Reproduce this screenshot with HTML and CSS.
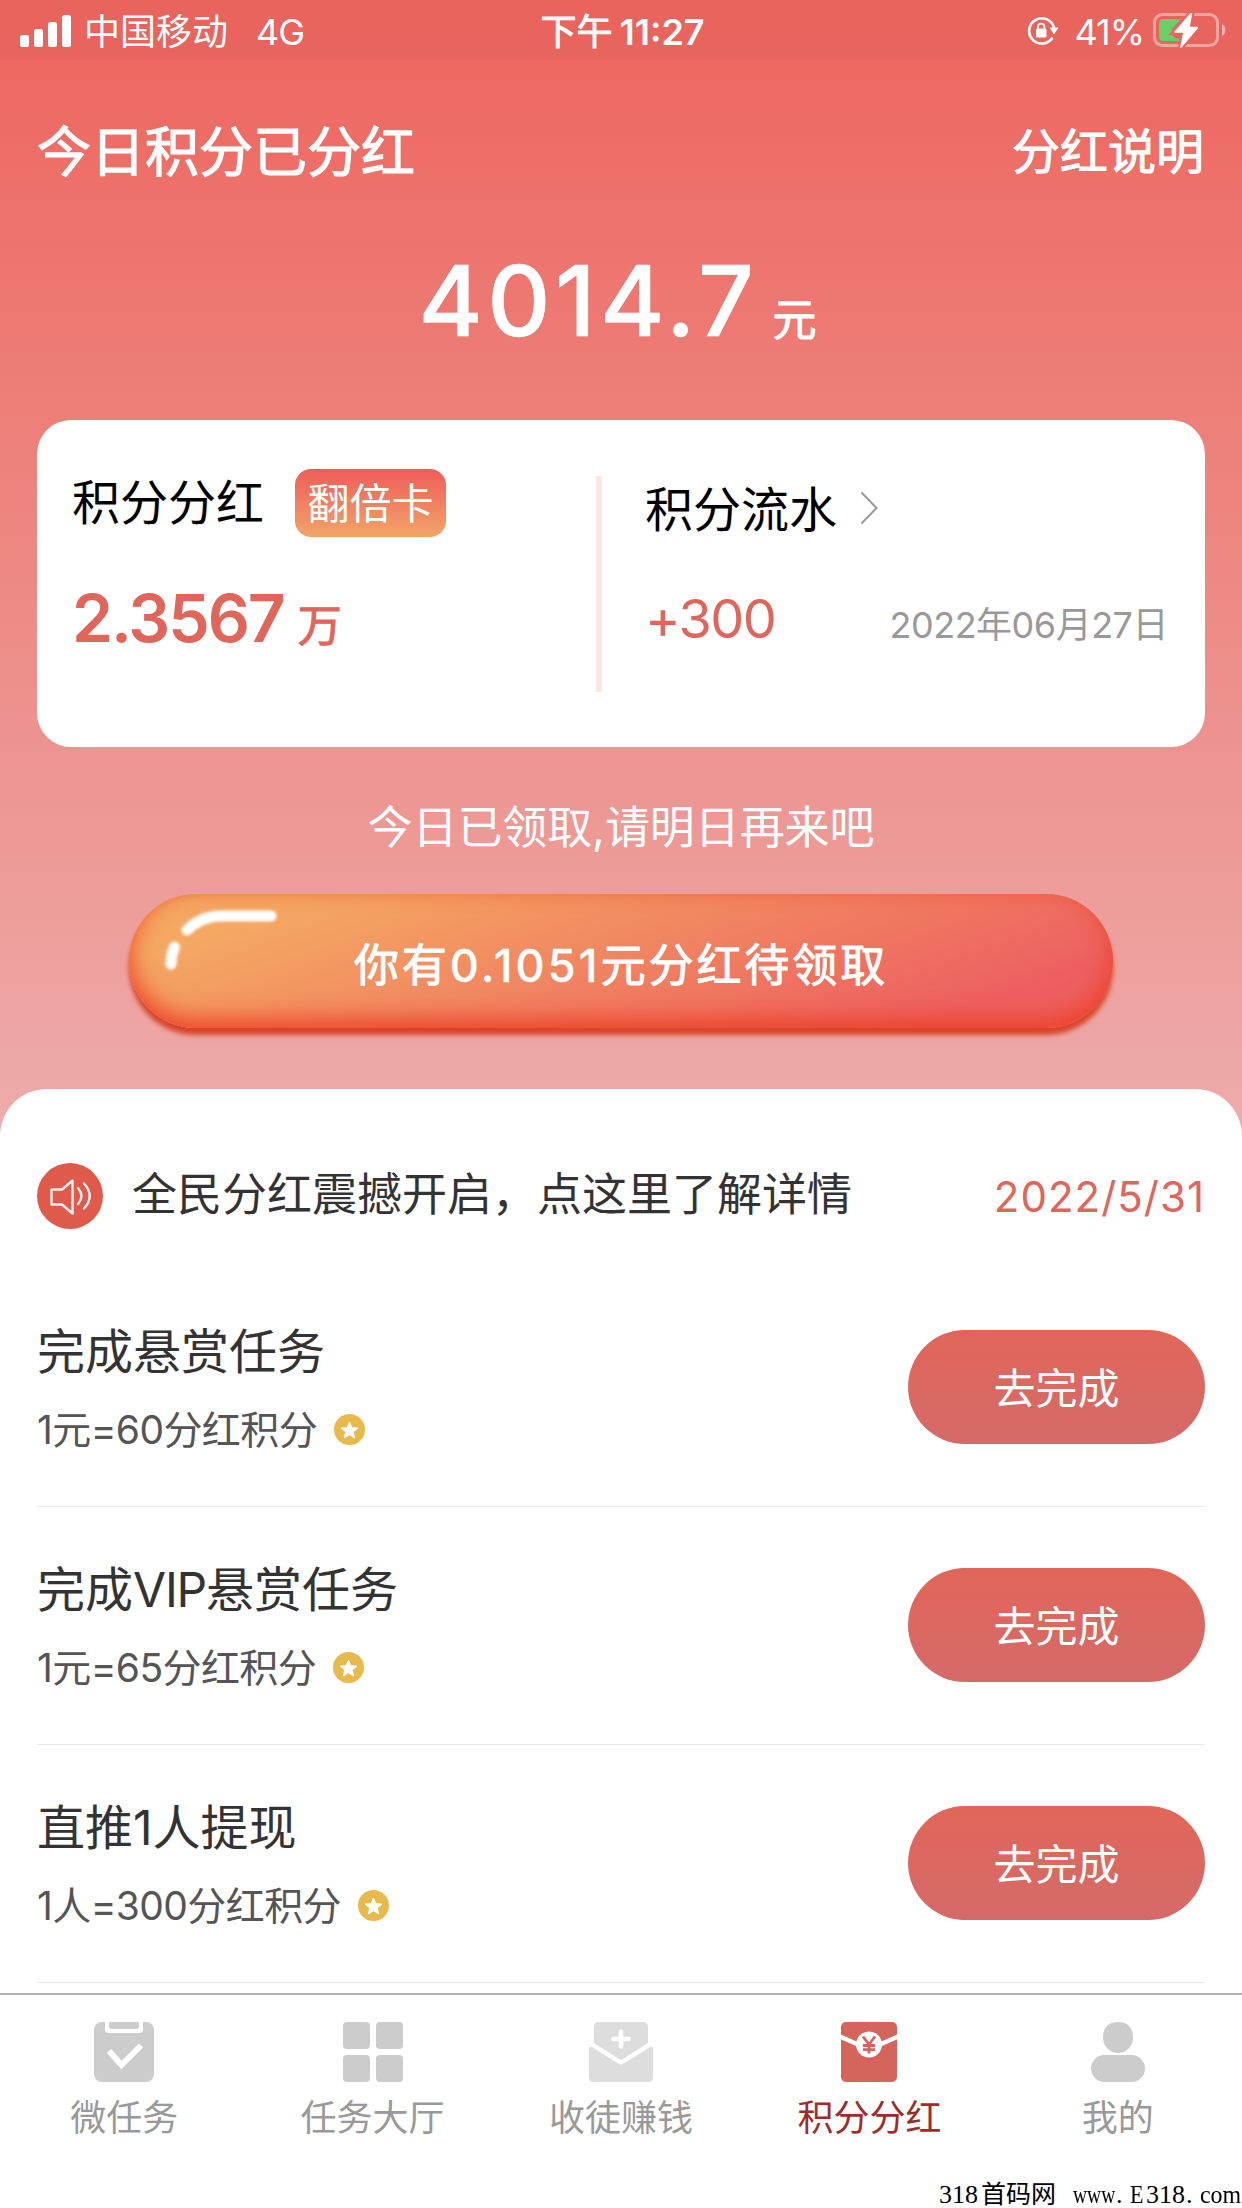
FILE: index.html
```html
<!DOCTYPE html>
<html lang="zh-CN">
<head>
<meta charset="utf-8">
<title>积分分红</title>
<link rel="stylesheet" href="styles.css">
</head>
<body>
<div class="app">
  <main class="screen">
    <div class="statusbar">
      <div class="status-left">
        <svg class="signal" width="51" height="32" viewBox="0 0 51 32" fill="#fff"><rect y="20" width="9" height="12" rx="2.5"/><rect x="14" y="14" width="9" height="18" rx="2.5"/><rect x="28" y="7" width="9" height="25" rx="2.5"/><rect x="42" width="9" height="32" rx="2.5"/></svg>
        <span class="carrier">中国移动</span><span class="network">4G</span>
      </div>
      <div class="clock"><span class="ampm">下午</span><span class="time">11:27</span></div>
      <div class="status-right">
        <svg class="lock" width="32" height="30" viewBox="0 0 32 30"><path d="M25.5 21.5A12.6 12.6 0 1 1 27 12" fill="none" stroke="#fff" stroke-width="2.6"/><path d="M22.5 11.5h9l-4.5 7z" fill="#fff"/><rect x="9" y="12.5" width="10.5" height="9" rx="1.5" fill="#fff"/><path d="M11 13v-2.2a3.2 3.2 0 0 1 6.4 0V13" fill="none" stroke="#fff" stroke-width="1.8"/></svg>
        <span class="percent">41%</span>
        <svg class="battery" width="74" height="36" viewBox="0 0 74 36"><rect x="1.5" y="1.5" width="63" height="31" rx="8" fill="none" stroke="#fff" stroke-opacity=".42" stroke-width="3"/><path d="M69 11c4.500 1.500 4.500 10.500 0 12z" fill="#fff" fill-opacity=".5"/><path d="M10 6h18l-9 10v5q2 5 8 5v2H10q-4 0-4-5V11q0-5 4-5z" fill="#68cf69"/><path d="M38.500 0 22 19h9l-3 15 16.500-19.500H36z" fill="#e9665e" stroke="#e9665e" stroke-width="6"/><path d="M38.500 0 22 19h9l-3 15 16.500-19.500H36z" fill="#fff" stroke="#fff" stroke-width="1.500" stroke-linejoin="round"/></svg>
      </div>
    </div>

    <header class="header">
      <h1 class="title">今日积分已分红</h1>
      <a class="rules">分红说明</a>
    </header>
    <div class="amount"><span class="amount-num">4014.7</span><span class="amount-unit">元</span></div>

    <section class="card">
      <div class="card-left">
        <div class="card-head"><span class="card-title">积分分红</span><span class="badge">翻倍卡</span></div>
        <div class="points"><span class="points-num">2.3567</span><span class="points-unit">万</span></div>
      </div>
      <div class="divider"></div>
      <div class="card-right">
        <div class="flow-head"><span class="card-title">积分流水</span><svg class="chevron" width="20" height="34" viewBox="0 0 20 34"><path d="m1.500 1.500 15 15.500-15 15.500" fill="none" stroke="#999" stroke-width="2"/></svg></div>
        <div class="flow-row"><span class="flow-num">+300</span><span class="flow-date">2022年06月27日</span></div>
      </div>
    </section>

    <p class="hint">今日已领取,请明日再来吧</p>
    <button class="claim">
      <svg class="shine" width="120" height="80" viewBox="0 0 120 80" fill="none" stroke="#fff" stroke-width="11" stroke-linecap="round"><path d="M28 29Q43 15 62 15H112"/><path d="M15.500 46Q12 54 12 63"/></svg>
      <span class="claim-text">你有<span class="claim-num">0.1051</span>元分红待领取</span>
    </button>

    <section class="panel">
      <div class="notice">
        <svg class="speaker" width="66" height="66" viewBox="0 0 66 66"><circle cx="33" cy="33" r="33" fill="#e05a4b"/><g fill="none" stroke="#fff" stroke-width="2.400" stroke-linejoin="round" stroke-linecap="round" stroke-opacity=".9"><path d="M35.500 17.500v33L25 41.500H14.500v-15H25z"/><path d="M41 25q7 8 0 16M47 20.500q11.500 12.500 0 25"/></g></svg>
        <span class="notice-text">全民分红震撼开启，点这里了解详情</span>
        <span class="notice-date">2022/5/31</span>
      </div>
      <div class="tasks">
        <div class="task">
          <div class="task-info"><div class="task-name">完成悬赏任务</div><div class="task-sub"><span class="rule">1元=60分红积分</span><svg class="star" width="31" height="31" viewBox="0 0 31 31"><circle cx="15.500" cy="15.500" r="15.500" fill="#e8ba4e"/><path d="m15.500 8 2.300 5.700 6.100.4-4.700 3.900 1.500 6-5.200-3.300-5.200 3.300 1.500-6L7.100 14.100l6.100-.4z" fill="#fff" stroke="#fff"/></svg></div></div>
          <button class="go">去完成</button>
        </div>
        <div class="task">
          <div class="task-info"><div class="task-name">完成<span class="vip">VIP</span>悬赏任务</div><div class="task-sub"><span class="rule">1元=65分红积分</span><svg class="star" width="31" height="31" viewBox="0 0 31 31"><circle cx="15.500" cy="15.500" r="15.500" fill="#e8ba4e"/><path d="m15.500 8 2.300 5.700 6.100.4-4.700 3.900 1.500 6-5.200-3.300-5.200 3.300 1.500-6L7.100 14.100l6.100-.4z" fill="#fff" stroke="#fff"/></svg></div></div>
          <button class="go">去完成</button>
        </div>
        <div class="task">
          <div class="task-info"><div class="task-name">直推1人提现</div><div class="task-sub"><span class="rule">1人=300分红积分</span><svg class="star" width="31" height="31" viewBox="0 0 31 31"><circle cx="15.500" cy="15.500" r="15.500" fill="#e8ba4e"/><path d="m15.500 8 2.300 5.700 6.100.4-4.700 3.900 1.500 6-5.200-3.300-5.200 3.300 1.500-6L7.100 14.100l6.100-.4z" fill="#fff" stroke="#fff"/></svg></div></div>
          <button class="go">去完成</button>
        </div>
      </div>
    </section>
  </main>

  <nav class="tabbar">
    <a class="tab"><svg width="64" height="60" viewBox="0 0 64 60"><rect x="2" width="60" height="60" rx="8" fill="#ccc"/><path d="M13 0h4v5q0 2 2 2h26q2 0 2-2V0h4v8q0 3-3 3H16q-3 0-3-3z" fill="#fff"/><path d="m17 29 12.500 14L49 23.500" fill="none" stroke="#fff" stroke-width="6"/></svg><span>微任务</span></a>
    <a class="tab"><svg width="64" height="60" viewBox="0 0 64 60" fill="#ccc"><rect x="2" width="27" height="27" rx="4"/><rect x="35" width="27" height="27" rx="4"/><rect x="2" y="33" width="27" height="27" rx="4"/><rect x="35" y="33" width="27" height="27" rx="4"/></svg><span>任务大厅</span></a>
    <a class="tab"><svg width="64" height="60" viewBox="0 0 64 60" fill="#ddd"><path d="M10 0H54q5 0 5 5V21L34 37q-2 1.500-4 0L5 21V5q0-5 5-5z"/><path d="M0 27q0-3 3-2L29 41.500q3 2 6 0L61 25q3-1 3 2V55q0 5-5 5H5q-5 0-5-5z"/><path d="M32 9.500v15M24.500 17h15" stroke="#fff" stroke-width="4.500" stroke-linecap="round"/></svg><span>收徒赚钱</span></a>
    <a class="tab active"><svg width="64" height="60" viewBox="0 0 64 60"><rect x="4" width="56" height="60" rx="5" fill="#d5645c"/><path d="M3 14.500 21 22.500M61 14.500 43 22.500" stroke="#fff" stroke-width="4.500"/><circle cx="32" cy="22.500" r="13" fill="#fff"/><path d="m26 14.500 6 8 6-8M32 22v9.500M26 23.500h12M26 27.700h12" fill="none" stroke="#d5645c" stroke-width="2.800"/></svg><span>积分分红</span></a>
    <a class="tab"><svg width="64" height="60" viewBox="0 0 64 60" fill="#ccc"><path d="M32 0c10 0 15 6 15 15.500S40 31 32 31 17 25 17 15.500 22 0 32 0z"/><rect x="5" y="33" width="54" height="27" rx="13.500"/></svg><span>我的</span></a>
    <div class="watermark"><span class="wm-num">318</span><span class="wm-cn">首码网</span><span class="wm-www">www</span><span class="wm-dot">.</span><span class="wm-e">E</span><span class="wm-num">318</span><span class="wm-dot">.</span><span class="wm-com">com</span></div>
  </nav>
</div>
</body>
</html>
```

FILE: styles.css
```css
* { box-sizing: border-box; }

body {
  margin: 0;
  font-family: Inter, "Noto Sans CJK SC", sans-serif;
  color: #333;
}

h1, p { margin: 0; font-weight: 400; }

button {
  border: 0;
  padding: 0;
  font-family: inherit;
  color: #fff;
}

svg { display: block; flex: none; }

.app {
  display: flex;
  flex-direction: column;
  width: 1242px;
  height: 2208px;
  overflow: hidden;
}

.screen {
  height: 1993px;
  overflow: hidden;
  background: linear-gradient(#ed655d 0, #edaba9 1120px);
}

/* status bar */
.statusbar {
  display: grid;
  grid-template-columns: 1fr auto 1fr;
  height: 60px;
  padding: 0 15px 0 20px;
  align-items: center;
  background: rgba(0, 0, 0, .02);
  color: #fff;
  font-size: 36px;
  line-height: 60px;
}

.status-left, .status-right { display: flex; align-items: center; }
.status-right { justify-content: flex-end; }
.carrier { margin: 2px 0 0 13px; }
.network { margin: 1px 0 0 28px; letter-spacing: -1px; }
.clock { display: flex; gap: 7px; padding-right: 2px; }
.ampm { padding-top: 1px; -webkit-text-stroke: .9px #fff; }
.time { padding-top: 1px; font-weight: 600; }
.percent { margin: 1px 9px 0 15px; letter-spacing: -1px; }

/* header */
.header {
  display: flex;
  justify-content: space-between;
  align-items: center;
  height: 72px;
  margin-top: 55px;
  padding: 0 38px 0 37px;
  color: #fff;
}

.title { margin-top: 4px; font-size: 54px; line-height: 72px; -webkit-text-stroke: 1.2px #fff; }
.rules { margin-top: 2px; font-size: 48px; line-height: 72px; -webkit-text-stroke: 1px #fff; }

.amount {
  display: flex;
  justify-content: center;
  align-items: baseline;
  gap: 14px;
  margin-top: 64px;
  height: 100px;
  padding-right: 7px;
  color: #fff;
  line-height: 100px;
}

.amount-num { font-size: 98px; font-weight: 500; letter-spacing: 4.5px; -webkit-text-stroke: .6px #fff; }
.amount-unit { font-size: 44px; -webkit-text-stroke: 1px #fff; }

/* summary card */
.card {
  display: flex;
  height: 327px;
  margin: 69px 37px 0;
  border-radius: 34px;
  background: #fff;
}

.card-left { width: 559px; padding: 49px 0 0 35px; }
.card-head { display: flex; align-items: center; height: 68px; }
.card-title { font-size: 48px; line-height: 60px; color: #000; }

.badge {
  width: 151px;
  height: 68px;
  margin-left: 31px;
  border-radius: 16px;
  background: linear-gradient(#ee5c59, #f2a468);
  color: #fff;
  font-size: 42px;
  line-height: 70px;
  text-align: center;
}

.points {
  display: flex;
  align-items: baseline;
  gap: 14px;
  margin-top: 41px;
  color: #e0655a;
  line-height: 80px;
}

.points-num { font-size: 66px; font-weight: 600; letter-spacing: -2.1px; }
.points-unit { font-size: 44px; -webkit-text-stroke: 1px #e0655a; }

.divider { width: 6px; height: 216px; margin-top: 56px; background: #f8e7e5; }

.card-right { flex: 1; padding: 60px 37px 0 43px; }
.flow-head { display: flex; align-items: center; height: 60px; }
.chevron { margin: -4px 0 0 23px; }

.flow-row {
  display: flex;
  justify-content: space-between;
  align-items: baseline;
  margin-top: 39px;
  line-height: 80px;
}

.flow-num { font-size: 54px; letter-spacing: -1.6px; color: #e0655a; }
.flow-date { font-size: 36px; letter-spacing: -.5px; color: #999; }

.hint {
  padding-top: 2px;
  margin-top: 50px;
  color: #fff;
  font-size: 45px;
  line-height: 58px;
  letter-spacing: -.1px;
  text-align: center;
}

/* claim button */
.claim {
  position: relative;
  display: flex;
  align-items: center;
  justify-content: center;
  width: 984px;
  height: 134px;
  margin: 37px auto 0;
  border-radius: 67px;
  background: linear-gradient(160deg, #f4a862 14%, #ed5f60 86%);
  box-shadow: inset 0 -8px 24px #ec4127, 0 7px 5px #d7452a;
}

.claim-text {
  padding-top: 9px;
  font-size: 45px;
  line-height: 125px;
  letter-spacing: 2.9px;
  -webkit-text-stroke: 1px #fff;
}

.claim-num { font-weight: 500; letter-spacing: 3.2px; -webkit-text-stroke: .3px #fff; }

.shine {
  position: absolute;
  left: 30px;
  top: 7px;
  filter: blur(1.5px);
}

/* task panel */
.panel {
  height: 920px;
  margin-top: 61px;
  padding: 74px 37px 0;
  border-radius: 47px 47px 0 0;
  background: #fff;
}

.notice { display: flex; align-items: center; height: 66px; }
.notice-text { margin: -3px 0 0 29px; font-size: 45px; line-height: 66px; }
.notice-date { margin-left: auto; color: #e0655a; font-size: 42px; letter-spacing: 1px; }

.tasks { margin-top: 40px; }

.task {
  display: flex;
  justify-content: space-between;
  align-items: center;
  height: 238px;
  border-bottom: 1px solid #e8e8e8;
}

.task-name { padding-top: 8px; font-size: 48px; line-height: 70px; }
.vip { letter-spacing: -1.2px; }
.task-sub { display: flex; align-items: center; height: 80px; color: #555; font-size: 39px; }
.rule { letter-spacing: -.6px; }
.star { margin: 5px 0 0 17px; }

.go {
  width: 297px;
  height: 114px;
  margin-top: -1px;
  padding-bottom: 3px;
  border-radius: 57px;
  background: linear-gradient(#e16659, #d56a69);
  font-size: 42px;
}

/* bottom tabs */
.tabbar {
  position: relative;
  display: flex;
  height: 215px;
  border-top: 2px solid #b0b0b0;
  background: #fff;
}

.tab {
  display: flex;
  flex: 1;
  flex-direction: column;
  align-items: center;
  padding-top: 27px;
  color: #999;
  font-size: 36px;
  line-height: 50px;
}

.tab span { margin-top: 11px; }
.tab.active { color: #a02c2a; }

.watermark {
  position: absolute;
  right: 0;
  bottom: 0;
  display: flex;
  color: #000;
  font-family: "Liberation Serif", "Noto Sans CJK SC", serif;
  font-size: 26px;
  line-height: 26px;
}

.wm-num { width: 40px; }
.wm-cn { width: 78px; margin: 0 14px 0 2px; font-size: 25px; }
.wm-www { width: 43px; transform: scaleX(.75); transform-origin: left; }
.wm-dot { width: 14px; }
.wm-e { width: 16px; transform: scaleX(.85); transform-origin: left; }
.wm-com { width: 42px; transform: scaleX(.92); transform-origin: left; }
```
